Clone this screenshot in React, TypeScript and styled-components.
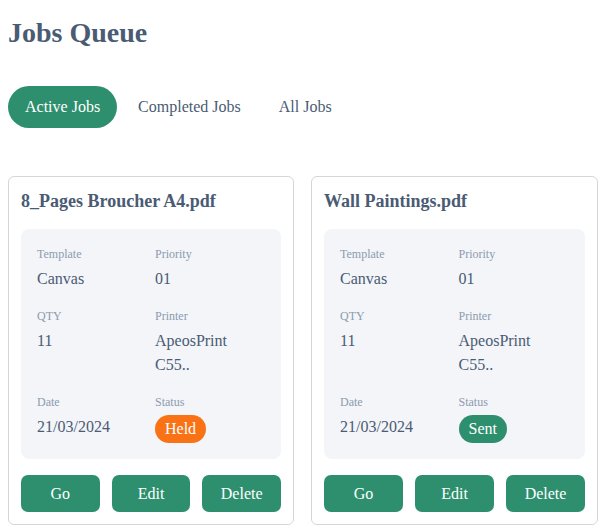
import React from 'react'
import styled, { createGlobalStyle } from 'styled-components'

const GlobalStyle = createGlobalStyle`
    body {
        margin: 0;
        background: #ffffff;
        font-family: "Liberation Serif", "Times New Roman", serif;
        color: #475569;
    }
`

const Page = styled.div`
    padding: 8px;
    width: 590px;
    box-sizing: content-box;
`

const Title = styled.h1`
    margin: 8px 0 0;
    font-size: 28px;
    line-height: 34px;
    font-weight: 700;
    color: #4a5b74;
`

const Tabs = styled.ul`
    display: flex;
    align-items: center;
    gap: 4px;
    list-style: none;
    margin: 36px 0 0;
    padding: 0;
`

const Tab = styled.li<{ $active?: boolean }>`
    padding: 9px 17px;
    line-height: 24px;
    font-size: 16px;
    border-radius: 999px;
    background: ${p => (p.$active ? '#2e8f6e' : 'transparent')};
    color: ${p => (p.$active ? '#ffffff' : '#4a5b74')};
    cursor: pointer;
`

const CardGrid = styled.div`
    display: grid;
    grid-template-columns: 286px 287px;
    gap: 17px;
    margin-top: 48px;
`

const Card = styled.div`
    border: 1px solid #d4d6da;
    border-radius: 6px;
    padding: 12px;
`

const CardTitle = styled.h2`
    margin: 0 0 16px;
    font-size: 18px;
    line-height: 24px;
    font-weight: 700;
    color: #4a5b74;
`

const InfoBox = styled.div`
    display: grid;
    grid-template-columns: 1fr 1fr;
    column-gap: 8px;
    row-gap: 16px;
    padding: 16px;
    background: #f3f5f8;
    border-radius: 8px;
`

const Field = styled.div`
    display: flex;
    flex-direction: column;
    align-items: flex-start;
`

const Label = styled.span`
    font-size: 12px;
    line-height: 18px;
    margin-bottom: 4px;
    color: #8c9bb0;
`

const Value = styled.span`
    font-size: 16px;
    line-height: 24px;
    color: #4a5b74;
`

const Badge = styled.span<{ $tone: 'held' | 'sent' }>`
    display: inline-block;
    padding: 2px 10px;
    font-size: 16px;
    line-height: 24px;
    border-radius: 14px;
    color: #ffffff;
    background: ${p => (p.$tone === 'held' ? '#f97316' : '#2e8f6e')};
`

const Actions = styled.div`
    display: grid;
    grid-template-columns: repeat(3, 1fr);
    gap: 12px;
    margin-top: 16px;
`

const ActionButton = styled.button`
    height: 37px;
    border: none;
    border-radius: 7px;
    background: #2e8f6e;
    color: #ffffff;
    font-family: inherit;
    font-size: 16px;
    cursor: pointer;
`

interface Job {
    name: string
    template: string
    priority: string
    qty: string
    printer: string
    date: string
    status: 'Held' | 'Sent'
}

const jobs: Job[] = [
    { name: '8_Pages Broucher A4.pdf', template: 'Canvas', priority: '01', qty: '11', printer: 'ApeosPrint C55..', date: '21/03/2024', status: 'Held' },
    { name: 'Wall Paintings.pdf', template: 'Canvas', priority: '01', qty: '11', printer: 'ApeosPrint C55..', date: '21/03/2024', status: 'Sent' },
]

const JobCard = ({ job }: { job: Job }) => (
    <Card>
        <CardTitle>{job.name}</CardTitle>
        <InfoBox>
            <Field><Label>Template</Label><Value>{job.template}</Value></Field>
            <Field><Label>Priority</Label><Value>{job.priority}</Value></Field>
            <Field><Label>QTY</Label><Value>{job.qty}</Value></Field>
            <Field><Label>Printer</Label><Value>{job.printer}</Value></Field>
            <Field><Label>Date</Label><Value>{job.date}</Value></Field>
            <Field>
                <Label>Status</Label>
                <Badge $tone={job.status === 'Held' ? 'held' : 'sent'}>{job.status}</Badge>
            </Field>
        </InfoBox>
        <Actions>
            <ActionButton>Go</ActionButton>
            <ActionButton>Edit</ActionButton>
            <ActionButton>Delete</ActionButton>
        </Actions>
    </Card>
)

const App = () => (
    <>
        <GlobalStyle />
        <Page>
            <Title>Jobs Queue</Title>
            <Tabs>
                <Tab $active>Active Jobs</Tab>
                <Tab>Completed Jobs</Tab>
                <Tab>All Jobs</Tab>
            </Tabs>
            <CardGrid>
                {jobs.map(job => <JobCard key={job.name} job={job} />)}
            </CardGrid>
        </Page>
    </>
)

export default App
